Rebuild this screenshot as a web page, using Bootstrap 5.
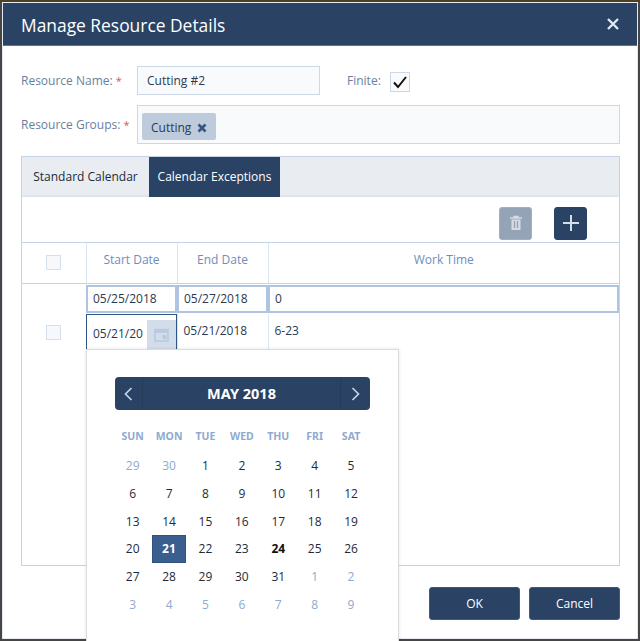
<!DOCTYPE html>
<html lang="en">
<head>
<meta charset="utf-8">
<title>Manage Resource Details</title>
<link rel="stylesheet" href="https://cdn.jsdelivr.net/npm/bootstrap@5.3.0/dist/css/bootstrap.min.css">
<style>
html,body{height:641px;overflow:hidden}
body{background:#454545;border-top:2px solid #4d3f22;font-family:"Open Sans","Noto Sans",sans-serif;font-size:12px;color:#2b3a4f;padding:0 0 0 2px;line-height:1.3}
.dlg{width:636px;height:637px;border:1px solid #e6ebf2;border-radius:0;background:#fff}
.dlg-head{height:43px;background:#2a4365;color:#fff;padding:0 18px;border-bottom:1px solid #5d7390;border-radius:0;flex-shrink:0}
.dlg-head h1{font-size:17.4px;font-weight:400;margin:3px 0 0;line-height:1}
.dlg-close{background:none;border:0;padding:0;width:14px;height:14px;line-height:0;margin-right:-1px}
.dlg-main{padding:20px 17px 0 18px;flex-grow:0}
.lbl{color:#6a7f9f;font-size:12px;margin:0}
.req{color:#e2525c;font-size:11px}
.r1{height:29px;margin-bottom:10px}
.lblw{width:116px;flex-shrink:0}
.inp{background:#f8fafc;border:1px solid #cbd8e8;border-radius:0;font-size:12px;color:#2b3a4f;padding:0 9px;height:29px;box-shadow:none;line-height:27px}
.inp-name{width:183px}
.fin{margin-left:27px;margin-right:9px}
.chk{width:20px;height:20px;background:#f8fafc;border:1px solid #cbd8e8;line-height:0;flex-shrink:0;margin-top:3px}
.r2{height:39px;margin-bottom:12px}
.groups{width:483px;height:39px;background:#f8fafc;border:1px solid #cbd8e8;padding:7px 4px}
.tagx{height:27px;background:#bdcbdd;border-radius:2px;padding:3px 5px 0 9px;color:#2b3a4f;width:74px;gap:6px;font-size:12px}
.pane{width:599px;height:410px;border:1px solid #c5d3e6;position:relative;background:#fff}
.tabsx{height:40px;background:#e9ecf1;border-bottom:2px solid #dfe5ee;flex-wrap:nowrap}
.tabx{height:40px;padding:0;display:flex;align-items:center;justify-content:center;font-size:12px;color:#222b38;background:none;border:0;border-radius:0}
.tabx.t1{width:127px}
.tabx.t2{width:131px;background:#2a4365;color:#fff}
.tools{height:46px;padding:7px 32px 0 0;gap:22px;border-bottom:1px solid #c5d3e6}
.tbtn{width:33px;height:33px;padding:0;border-radius:3px;border:1px solid #2a4365;background:#2a4365;display:flex;align-items:center;justify-content:center}
.tbtn.off{background:#95a3b6;border-color:#a3afc0;opacity:1}
.gridx{table-layout:fixed;width:100%;margin:0;border-collapse:collapse;color:#2b3a4f}
.gridx th,.gridx td{padding:0;border:0;font-weight:400;font-size:12px;background:none;box-shadow:none;color:inherit}
.gridx thead th{height:40px;border-bottom:1px solid #c5d3e6;border-left:1px solid #dbe5f1;color:#6f8dbb;text-align:center;vertical-align:top;padding-top:9px}
.gridx thead th:first-child{border-left:0;padding-top:12px}
.sq{display:block;width:15px;height:15px;background:#f6f8fb;border:1px solid #d5e0ee;margin:0 auto 0 24px}
.eb{display:block;height:28px;margin-top:1px;border:2px solid #aec4e0;background:#fff;padding-left:5px;line-height:24px;color:#2b3a4f}
.gridx tbody tr.rw1 td{height:31px;vertical-align:top}
.gridx tbody tr.rw2 td{height:35px;border-left:1px solid #dbe5f1;padding:9px 0 0 6px;vertical-align:top}
.gridx tbody tr.rw2 td:first-child{border-left:0;padding:11px 0 0}
.gridx tbody tr.rw2 td.act{padding:0;border-left:0}
.act-in{height:35px;border:solid #2f5586;border-width:1px 1px 0 1px;display:flex;justify-content:space-between;padding-left:6px}
.act-in span{padding-top:11px;white-space:nowrap}
.act-ic{width:29px;margin-top:5px;background:#d3dde9;display:flex;align-items:center;justify-content:center}
.calx{position:absolute;left:64px;top:192px;width:313px;height:300px;background:#fff;border:1px solid #dcdcdc;box-shadow:0 0 3px rgba(0,0,0,.12);padding:27px 28px 0;z-index:5}
.calbar{height:33px;background:#2a4365;border-radius:4px;color:#fff;font-weight:700;font-size:14.5px;font-family:"Noto Sans","Open Sans",sans-serif;padding:0}
.calnav{height:33px;display:flex;align-items:center;justify-content:center}
.calnav.prev{width:28px;border-right:1px solid #253c5a}
.calnav.next{width:30px;border-left:1px solid #253c5a}
.days{display:grid;grid-template-columns:repeat(7,36.4px);width:255px;margin:18px 0 0 -.5px}
.days span{text-align:center;font-size:10.5px;font-weight:700;color:#8eaad0;line-height:16px;font-family:"Noto Sans","Open Sans",sans-serif}
.dates{display:grid;grid-template-columns:repeat(7,36.4px);grid-auto-rows:27.8px;width:255px;margin:8px 0 0 -.5px}
.dates span{display:flex;align-items:center;justify-content:center;font-size:12px;color:#1f2a38}
.dates .mut{color:#8eaad0}
.dates .now{font-weight:700;color:#111}
.dates .sel{background:#3a5f8f;border:1px solid #30527e;color:#fff;font-weight:700;width:34px;margin-left:1px}
.dlg-foot{padding:21px 17px 0 0;gap:9px;border:0}
.fbtn{width:91px;height:33px;background:#2a4365;border:1px solid #3c5a85;color:#fff;border-radius:3px;font-size:12px;padding:0}
</style>
</head>
<body>
<div class="modal-content dlg">
  <div class="modal-header dlg-head d-flex justify-content-between align-items-center">
    <h1>Manage Resource Details</h1>
    <button type="button" class="dlg-close" aria-label="Close"><svg width="14" height="14" viewBox="0 0 14 14"><path d="M2 2l10 10M12 2L2 12" stroke="#dfe7f1" stroke-width="2.4" fill="none"/></svg></button>
  </div>
  <div class="dlg-main">
    <div class="d-flex align-items-center r1">
      <label class="lbl lblw">Resource Name: <span class="req">*</span></label>
      <div class="inp inp-name">Cutting #2</div>
      <label class="lbl fin">Finite:</label>
      <span class="chk d-inline-flex align-items-center justify-content-center"><svg width="16" height="14" viewBox="0 0 16 14"><path d="M2 7.5l4 4.5L14 2" stroke="#111" stroke-width="2" fill="none"/></svg></span>
    </div>
    <div class="d-flex align-items-center r2">
      <label class="lbl lblw">Resource Groups: <span class="req">*</span></label>
      <div class="groups d-flex">
        <span class="tagx d-inline-flex align-items-center">Cutting
          <svg width="10" height="10" viewBox="0 0 10 10"><path d="M1.5 1.5l7 7M8.5 1.5l-7 7" stroke="#35557f" stroke-width="2.6" fill="none"/></svg>
        </span>
      </div>
    </div>
    <div class="pane">
      <div class="nav tabsx">
        <button type="button" class="tabx t1">Standard Calendar</button>
        <button type="button" class="tabx t2">Calendar Exceptions</button>
      </div>
      <div class="tools d-flex justify-content-end align-items-center">
        <button type="button" class="tbtn off" aria-label="Delete"><svg width="14" height="16" viewBox="0 0 14 16"><path d="M1 3h12M5 3V1.5h4V3" stroke="#d4dbe5" stroke-width="1.3" fill="none"/><path d="M2.5 4.5h9V15h-9z" fill="#d4dbe5"/><path d="M5.5 6v7M8.5 6v7" stroke="#95a3b6" stroke-width="1.3"/></svg></button>
        <button type="button" class="tbtn" aria-label="Add"><svg width="16" height="16" viewBox="0 0 16 16"><path d="M8 0v16M0 8h16" stroke="#d5dfeb" stroke-width="2" fill="none"/></svg></button>
      </div>
      <table class="table gridx">
        <colgroup><col style="width:64px"><col style="width:91px"><col style="width:91px"><col></colgroup>
        <thead><tr><th><span class="sq"></span></th><th>Start Date</th><th>End Date</th><th>Work Time</th></tr></thead>
        <tbody>
          <tr class="rw1"><td></td><td><span class="eb">05/25/2018</span></td><td><span class="eb">05/27/2018</span></td><td><span class="eb">0</span></td></tr>
          <tr class="rw2"><td><span class="sq"></span></td>
            <td class="act"><div class="act-in"><span>05/21/20</span><div class="act-ic"><svg width="15" height="15" viewBox="0 0 15 15"><path d="M1 2.5h13v11.500H1z" fill="none" stroke="#b6c9e0" stroke-width="1.5"/><path d="M1 4.500h13" stroke="#b6c9e0" stroke-width="2.500"/><path d="M8.500 8h4v4h-4z" fill="#b6c9e0"/></svg></div></div></td>
            <td>05/21/2018</td><td>6-23</td></tr>
        </tbody>
      </table>
      <div class="calx">
        <div class="calbar d-flex align-items-center justify-content-between">
          <span class="calnav prev"><svg width="9" height="14" viewBox="0 0 9 14"><path d="M7.5 1L1.5 7l6 6" stroke="#c5d3e6" stroke-width="1.7" fill="none"/></svg></span>
          <span>MAY 2018</span>
          <span class="calnav next"><svg width="9" height="14" viewBox="0 0 9 14"><path d="M1.5 1l6 6-6 6" stroke="#c5d3e6" stroke-width="1.7" fill="none"/></svg></span>
        </div>
        <div class="days"><span>SUN</span><span>MON</span><span>TUE</span><span>WED</span><span>THU</span><span>FRI</span><span>SAT</span></div>
        <div class="dates">
          <span class="mut">29</span><span class="mut">30</span><span>1</span><span>2</span><span>3</span><span>4</span><span>5</span>
          <span>6</span><span>7</span><span>8</span><span>9</span><span>10</span><span>11</span><span>12</span>
          <span>13</span><span>14</span><span>15</span><span>16</span><span>17</span><span>18</span><span>19</span>
          <span>20</span><span class="sel">21</span><span>22</span><span>23</span><span class="now">24</span><span>25</span><span>26</span>
          <span>27</span><span>28</span><span>29</span><span>30</span><span>31</span><span class="mut">1</span><span class="mut">2</span>
          <span class="mut">3</span><span class="mut">4</span><span class="mut">5</span><span class="mut">6</span><span class="mut">7</span><span class="mut">8</span><span class="mut">9</span>
        </div>
      </div>
    </div>
  </div>
  <div class="modal-footer dlg-foot d-flex justify-content-end">
    <button type="button" class="btn fbtn">OK</button>
    <button type="button" class="btn fbtn">Cancel</button>
  </div>
</div>
<script src="https://cdn.jsdelivr.net/npm/bootstrap@5.3.0/dist/js/bootstrap.bundle.min.js"></script>
</body>
</html>
